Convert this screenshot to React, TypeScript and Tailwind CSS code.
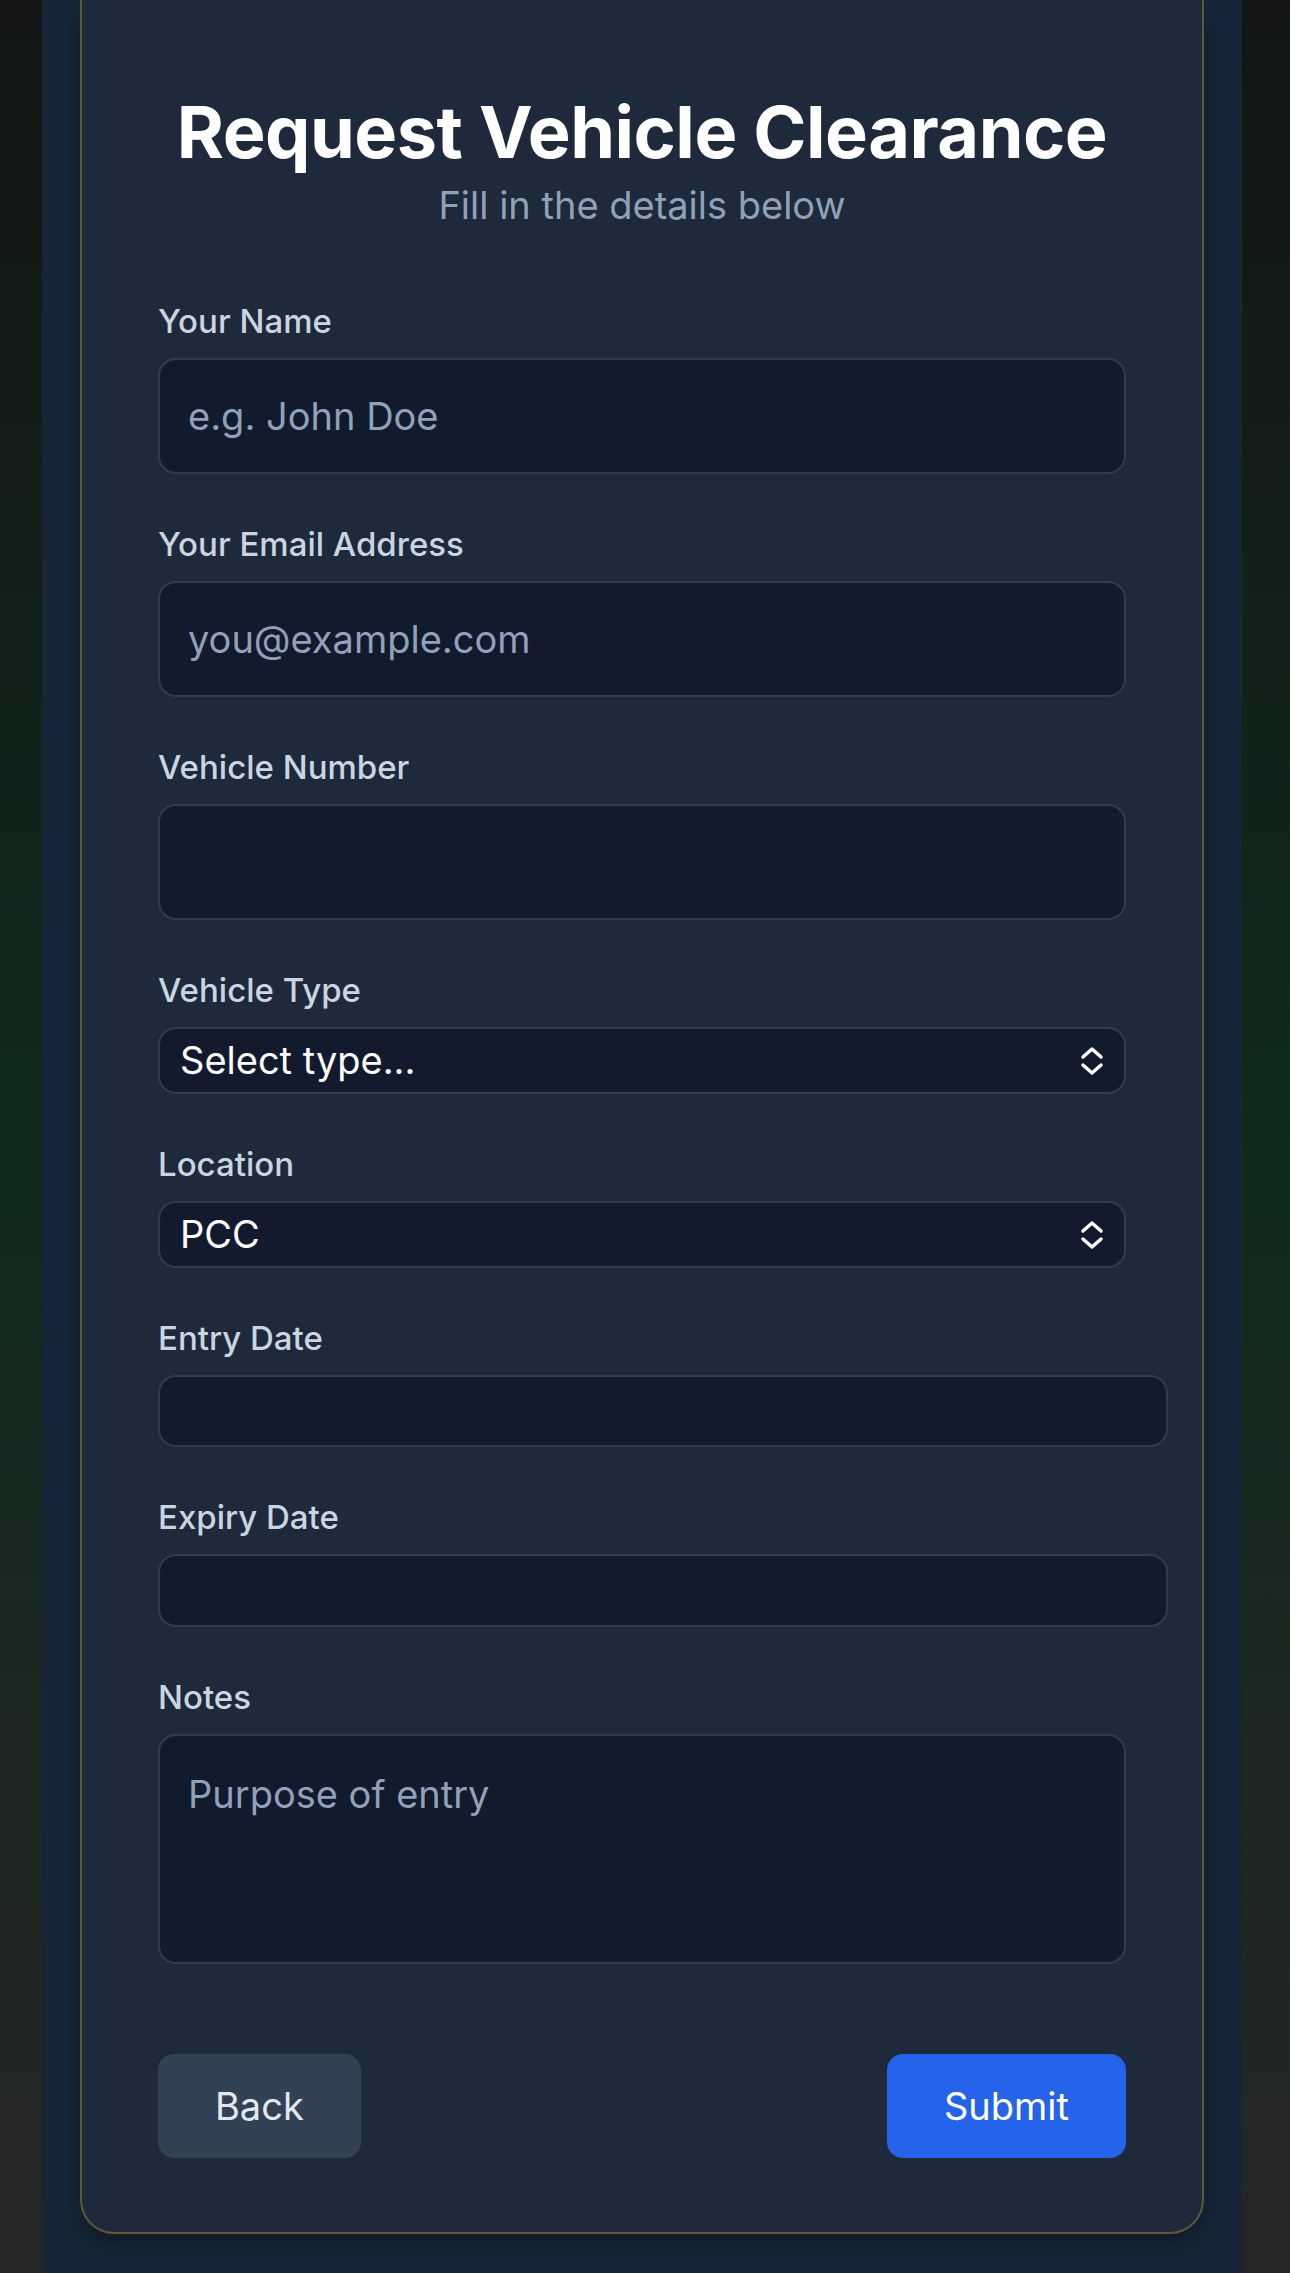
import { ReactNode } from "react";

const labelCls = "block text-[33px] leading-[48px] font-medium text-slate-300 mb-[13px]";
const boxCls =
  "block bg-[#121a2d] border-2 border-[#2f3b4f] rounded-[18px] text-white outline-none placeholder:text-slate-400";

function Field({ label, children }: { label: string; children: ReactNode }) {
  return (
    <div>
      <label className={labelCls}>{label}</label>
      {children}
    </div>
  );
}

function Chevrons() {
  return (
    <svg width="26" height="30" viewBox="0 0 26 30" fill="none" stroke="white" strokeWidth="3.4" strokeLinecap="round" strokeLinejoin="round">
      <path d="M4 11 L13 3 L22 11" />
      <path d="M4 19 L13 27 L22 19" />
    </svg>
  );
}

function SelectBox({ value }: { value: string }) {
  return (
    <div className="relative w-[968px]">
      <select
        defaultValue={value}
        className={`${boxCls} w-full h-[67px] appearance-none pl-[20px] pr-[60px] text-[38px]`}
      >
        <option>{value}</option>
      </select>
      {/* native-looking up/down chevrons */}
      <span className="pointer-events-none absolute right-[21px] top-1/2 -translate-y-1/2">
        <Chevrons />
      </span>
    </div>
  );
}

export default function App() {
  return (
    <div className="min-h-screen bg-linear-to-b from-[#131614] via-[#0f2a1d] to-[#262626] font-['Inter',sans-serif]">
      <div className="ml-[42px] w-[1200px] min-h-[2273px] bg-[#162538] px-[38px]">
        <div className="border-x-2 border-b-2 border-[#5f5834] rounded-b-[34px] bg-[#1e293b] px-[76px] pt-[89px] pb-[74px] shadow-[0_12px_18px_rgba(0,0,0,0.25)]">
          <h1 className="text-center text-[72px] leading-[86px] font-bold text-white tracking-[-0.5px]">
            Request Vehicle Clearance
          </h1>
          <p className="text-center text-[38px] leading-[60px] text-slate-400">Fill in the details below</p>

          <form className="mt-[62px] flex flex-col gap-[46px]" onSubmit={(e) => e.preventDefault()}>
            <Field label="Your Name">
              <input className={`${boxCls} w-[968px] h-[116px] px-[28px] text-[38px]`} placeholder="e.g. John Doe" />
            </Field>
            <Field label="Your Email Address">
              <input className={`${boxCls} w-[968px] h-[116px] px-[28px] text-[38px]`} placeholder="you@example.com" />
            </Field>
            <Field label="Vehicle Number">
              <input className={`${boxCls} w-[968px] h-[116px] px-[28px] text-[38px]`} />
            </Field>
            <Field label="Vehicle Type">
              <SelectBox value="Select type..." />
            </Field>
            <Field label="Location">
              <SelectBox value="PCC" />
            </Field>
            <Field label="Entry Date">
              <input className={`${boxCls} w-[1010px] h-[72px] px-[20px] text-[38px]`} />
            </Field>
            <Field label="Expiry Date">
              <input className={`${boxCls} w-[1010px] h-[73px] px-[20px] text-[38px]`} />
            </Field>
            <Field label="Notes">
              <textarea
                className={`${boxCls} w-[968px] h-[230px] px-[28px] py-[28px] text-[38px] leading-[60px] resize-none`}
                placeholder="Purpose of entry"
              />
            </Field>

            <div className="mt-[44px] flex justify-between">
              <button type="button" className="h-[104px] px-[57px] rounded-[16px] bg-[#334155] text-slate-200 text-[38px]">
                Back
              </button>
              <button type="submit" className="h-[104px] px-[57px] rounded-[16px] bg-[#2563eb] text-white text-[38px]">
                Submit
              </button>
            </div>
          </form>
        </div>
      </div>
    </div>
  );
}
